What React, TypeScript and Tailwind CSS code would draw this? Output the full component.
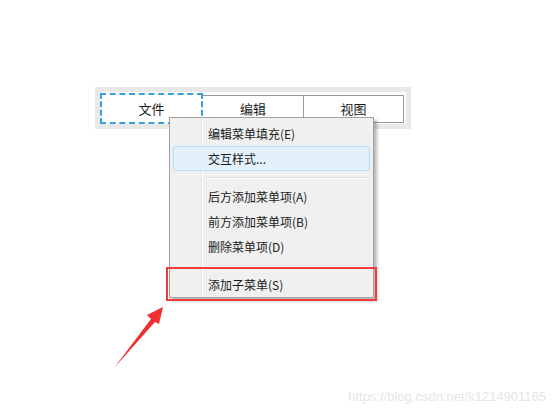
import React from "react";

const font = { fontFamily: '"Noto Sans CJK SC", "Noto Sans", sans-serif' };

function Item({ label, hl }: { label: string; hl?: boolean }) {
  return (
    <div className="relative h-[25px] flex items-center">
      {hl && (
        <div className="absolute left-[3px] right-[3px] top-0 bottom-0 rounded-[3px] border border-[#b8dcf3] bg-[#e4f1fb]" />
      )}
      <span className="relative pl-[38px] pt-[1px] text-[12px] text-[#1b1b1b] leading-none">{label}</span>
    </div>
  );
}

function Sep() {
  return (
    <div className="h-[13px] flex items-center pl-[34px] pr-[3px]">
      <div className="h-[2px] w-full border-t border-[#e0e0e0] border-b border-b-white" />
    </div>
  );
}

export default function App() {
  return (
    <div className="relative w-[554px] h-[411px] bg-white overflow-hidden" style={font}>
      <div className="pt-[87px] pl-[95px]">
        <div className="w-[316px] h-[42px] border-[5px] border-[#e8e8e8] bg-white">
          <div className="flex pt-[3px] w-[304px]">
            <div className="relative w-[103px] h-[28px] border border-[#9a9a9a] flex items-center justify-center text-[13px] text-[#1b1b1b]">
              <div className="absolute -left-[1px] -top-[3px] -right-[1px] -bottom-[2px] border-2 border-dashed border-[#3aa0d8] bg-white" />
              <span className="relative">文件</span>
            </div>
            <div className="w-[101px] h-[28px] border border-l-0 border-[#9a9a9a] flex items-center justify-center text-[13px] text-[#1b1b1b]">
              编辑
            </div>
            <div className="w-[100px] h-[28px] border border-l-0 border-[#9a9a9a] flex items-center justify-center text-[13px] text-[#1b1b1b]">
              视图
            </div>
          </div>
        </div>
      </div>

      <div className="absolute left-[169px] top-[117px] w-[205px] h-[181px] border border-[#a0a0a0] bg-[#f0f0f0] shadow-[3px_3px_3px_rgba(0,0,0,0.28)]">
        <div className="absolute left-[31px] top-0 bottom-0 w-[2px] border-l border-[#e2e3e3] border-r border-r-white" />
        <div className="relative flex flex-col pt-[3px]">
          <Item label="编辑菜单填充(E)" />
          <Item label="交互样式..." hl />
          <Sep />
          <Item label="后方添加菜单项(A)" />
          <Item label="前方添加菜单项(B)" />
          <Item label="删除菜单项(D)" />
          <Sep />
          <Item label="添加子菜单(S)" />
        </div>
      </div>

      <div className="absolute left-[166px] top-[267px] w-[211px] h-[34px] border-2 border-[#ef3b3b]" />

      <svg className="absolute left-0 top-0" width="554" height="411" viewBox="0 0 554 411">
        <polygon points="114,368 151,319 147,315 163,307 159,324 155,322" fill="#f03030" />
      </svg>

      <div
        className="absolute right-[8px] bottom-[8px] text-[13px] leading-none text-[#e6e6e6]"
        style={{ fontFamily: '"Liberation Sans", Arial, sans-serif' }}
      >
        https://blog.csdn.net/k1214901165
      </div>
    </div>
  );
}
